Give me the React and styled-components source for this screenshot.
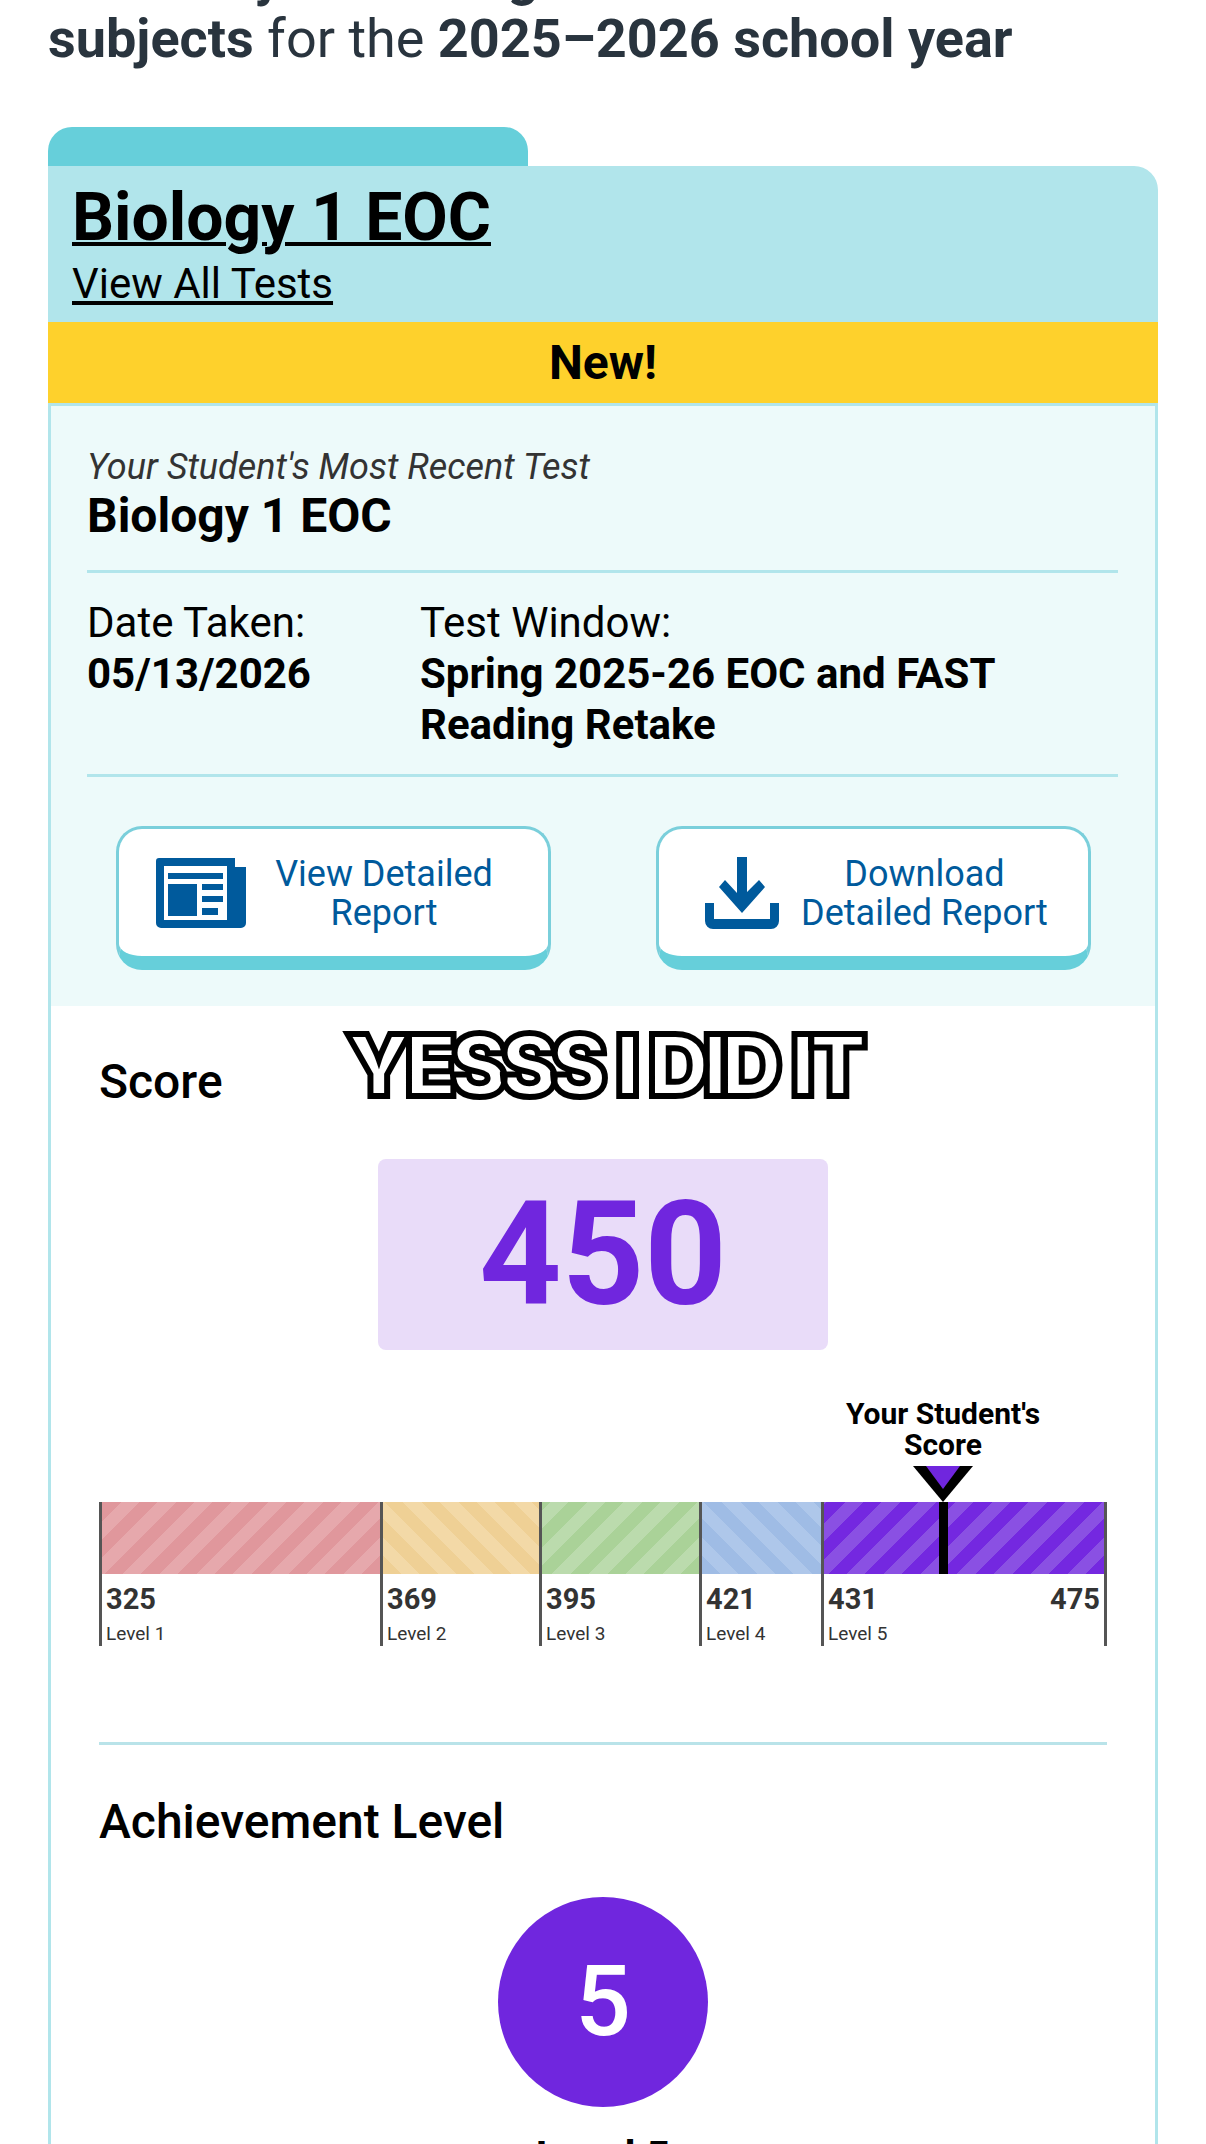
import React from "react";
import styled, { createGlobalStyle } from "styled-components";

const Global = createGlobalStyle`
  html, body { margin: 0; padding: 0; background: #fff; height: 2144px; overflow: hidden; }
  body { font-family: Roboto, "Liberation Sans", sans-serif; color: #000; }
  * { box-sizing: border-box; }
`;

const Page = styled.div`
  width: 1206px;
  height: 2144px;
  overflow: hidden;
  padding: 0 48px;
`;
const Heading = styled.h1`
  margin: -54px 0 0;
  font-size: 54px;
  line-height: 62px;
  font-weight: 400;
  color: #29343e;
  white-space: nowrap;
  b { font-weight: 700; }
`;
const Tab = styled.div`
  width: 480px;
  height: 39px;
  margin-top: 57px;
  background: #66cfda;
  border-radius: 24px 24px 0 0;
`;
const Header = styled.header`
  height: 156px;
  padding: 16px 24px 0;
  background: #b1e5eb;
  border-radius: 0 24px 0 0;
`;
const Title = styled.a`
  display: block;
  font-size: 66px;
  line-height: 72px;
  font-weight: 700;
  color: #000;
  text-decoration: underline;
  text-decoration-thickness: 4px;
  width: max-content;
`;
const AllTests = styled.a`
  display: block;
  margin-top: 5px;
  font-size: 42px;
  line-height: 50px;
  color: #000;
  text-decoration: underline;
  width: max-content;
`;
const Ribbon = styled.div`
  height: 81px;
  line-height: 82px;
  text-align: center;
  background: #fed12c;
  font-size: 48px;
  font-weight: 700;
`;
const Panel = styled.section`
  border: solid #b1e5eb;
  border-width: 3px 3px 0;
  height: 1800px;
`;
const Summary = styled.div`
  height: 600px;
  padding: 39px 37px 0 36px;
  background: #edfafa;
`;
const Eyebrow = styled.div`
  font-size: 36px;
  line-height: 44px;
  font-style: italic;
  color: #333;
`;
const TestName = styled.div`
  font-size: 48px;
  line-height: 54px;
  font-weight: 700;
  padding-bottom: 27px;
  border-bottom: 3px solid #b1e5eb;
`;
const Meta = styled.div`
  display: grid;
  grid-template-columns: 333px 1fr;
  padding: 24px 0 24px;
  border-bottom: 3px solid #b1e5eb;
`;
const MetaLabel = styled.div`
  font-size: 42px;
  line-height: 51px;
`;
const MetaValue = styled.div`
  font-size: 42px;
  line-height: 51px;
  font-weight: 700;
`;
const Actions = styled.div`
  display: flex;
  justify-content: space-between;
  padding: 49px 27px 0 29px;
`;
const ActionButton = styled.a`
  width: 435px;
  height: 144px;
  display: flex;
  align-items: center;
  padding: 0 0 0 ${(p) => p.$pad}px;
  background: #fff;
  border: 3px solid #7acfdb;
  border-bottom-width: 14px;
  border-bottom-color: #66cfda;
  border-radius: 26px;
  color: #005a9c;
  font-size: 36px;
  line-height: 39px;
  text-align: center;
`;
const ActionIcon = styled.svg`
  flex: none;
  fill: #005a9c;
`;
const ActionLabel = styled.span`
  flex: 1;
  padding-top: 3px;
  padding-right: ${(p) => p.$right}px;
  white-space: nowrap;
`;
const ScoreBlock = styled.div`
  position: relative;
  padding: 49px 48px 0;
`;
const SectionTitle = styled.h2`
  margin: 0;
  font-size: 48px;
  line-height: 54px;
  font-weight: 500;
`;
const Sticker = styled.div`
  position: absolute;
  left: 0;
  right: 0;
  top: 10px;
  text-align: center;
  font-family: Inter, Roboto, sans-serif;
  font-size: 85px;
  line-height: 100px;
  font-weight: 900;
  letter-spacing: -6.5px;
  word-spacing: 4px;
  color: #fff;
  -webkit-text-stroke: 6px #000;
  white-space: nowrap;
`;
const ScoreBox = styled.div`
  width: 450px;
  height: 191px;
  margin: 50px auto 0;
  background: #e9dcf9;
  border-radius: 8px;
  color: #7026de;
  font-size: 144px;
  line-height: 191px;
  font-weight: 700;
  text-align: center;
`;
const Chart = styled.div`
  position: relative;
  margin-top: 152px;
  display: flex;
  width: 1008px;
`;
const Segment = styled.div`
  width: ${(p) => p.$w}px;
  height: 144px;
  border-left: 3px solid #555;
  border-right: ${(p) => (p.$last ? "3px solid #555" : "0")};
  color: #333;
`;
const Stripe = styled.div`
  height: 72px;
  background: repeating-linear-gradient(
    ${(p) => p.$dir}deg,
    ${(p) => p.$a} 0 13px,
    ${(p) => p.$b} 13px 26px
  );
`;
const Labels = styled.div`
  display: flex;
  justify-content: space-between;
  padding: 8px 4px 0 4px;
  font-size: 29px;
  line-height: 34px;
  font-weight: 700;
`;
const LevelText = styled.div`
  padding-left: 4px;
  font-size: 19px;
  line-height: 24px;
  margin-top: 6px;
`;
const Callout = styled.div`
  position: absolute;
  left: 744px;
  bottom: 100%;
  width: 200px;
  text-align: center;
  font-size: 30px;
  line-height: 31px;
  font-weight: 700;
  padding-bottom: 42px;
`;
const Pointer = styled.svg`
  position: absolute;
  left: 70px;
  bottom: 0;
`;
const Needle = styled.div`
  position: absolute;
  left: 840px;
  top: 0;
  width: 9px;
  height: 72px;
  background: #000;
`;
const Rule = styled.hr`
  margin: 96px 0 0;
  height: 3px;
  border: 0;
  background: #b9e3e9;
`;
const Achievement = styled(SectionTitle)`
  margin-top: 50px;
`;
const Circle = styled.div`
  width: 210px;
  height: 210px;
  margin: 48px auto 0;
  border-radius: 50%;
  background: #7026de;
  color: #fff;
  font-size: 98px;
  line-height: 210px;
  font-weight: 500;
  text-align: center;
`;
const LevelName = styled.div`
  margin-top: 25px;
  text-align: center;
  font-size: 42px;
  line-height: 50px;
  font-weight: 700;
`;

const levels = [
  { w: 281, n: "325", l: "Level 1", dir: -45, a: "#e0979c", b: "#e6a8ac" },
  { w: 159, n: "369", l: "Level 2", dir: 45, a: "#efd095", b: "#f3d9a7" },
  { w: 160, n: "395", l: "Level 3", dir: -45, a: "#aad298", b: "#bbdbad" },
  { w: 122, n: "421", l: "Level 4", dir: 45, a: "#9fbce5", b: "#aec7ea" },
  { w: 286, n: "431", l: "Level 5", dir: -45, a: "#7428e0", b: "#8a50e3", end: "475", last: true },
];

export default function App() {
  return (
    <Page>
      <Global />
      <Heading>
        <b>Summary of Testing</b>
        <br />
        <b>subjects</b> for the <b>2025–2026 school year</b>
      </Heading>
      <Tab />
      <Header>
        <Title>Biology 1 EOC</Title>
        <AllTests>View All Tests</AllTests>
      </Header>
      <Ribbon>New!</Ribbon>
      <Panel>
        <Summary>
          <Eyebrow>Your Student's Most Recent Test</Eyebrow>
          <TestName>Biology 1 EOC</TestName>
          <Meta>
            <div>
              <MetaLabel>Date Taken:</MetaLabel>
              <MetaValue>05/13/2026</MetaValue>
            </div>
            <div>
              <MetaLabel>Test Window:</MetaLabel>
              <MetaValue>
                Spring 2025-26 EOC and FAST
                <br />
                Reading Retake
              </MetaValue>
            </div>
          </Meta>
          <Actions>
            <ActionButton $pad={37}>
              <ActionIcon width="90" height="70" viewBox="0 0 90 70">
                <path d="M3 0h76v9h11v56a5 5 0 0 1-5 5H5a5 5 0 0 1-5-5V3a3 3 0 0 1 3-3zm5 8v54h63V8z" fillRule="evenodd" />
                <path d="M12 15h55v6H12zM12 26h29v32H12zM46 26h21v6H46zM46 38h21v6H46zM46 50h16v7H46z" />
              </ActionIcon>
              <ActionLabel $right={26}>
                View Detailed
                <br />
                Report
              </ActionLabel>
            </ActionButton>
            <ActionButton $pad={46}>
              <ActionIcon width="74" height="72" viewBox="0 0 74 72">
                <path d="M32 0h10v36l-1 0 0 0h0l13-13 6 7-23 26-23-26 6-7 12 13z" />
                <path d="M0 46h9v16h56V46h9v18a8 8 0 0 1-8 8H8a8 8 0 0 1-8-8z" />
              </ActionIcon>
              <ActionLabel $right={18}>
                Download
                <br />
                Detailed Report
              </ActionLabel>
            </ActionButton>
          </Actions>
        </Summary>
        <ScoreBlock>
          <SectionTitle>Score</SectionTitle>
          <Sticker>YESSS I DID IT</Sticker>
          <ScoreBox>450</ScoreBox>
          <Chart>
            {levels.map((s) => (
              <Segment key={s.n} $w={s.w} $last={s.last}>
                <Stripe $dir={s.dir} $a={s.a} $b={s.b} />
                <Labels>
                  <span>{s.n}</span>
                  {s.end && <span>{s.end}</span>}
                </Labels>
                <LevelText>{s.l}</LevelText>
              </Segment>
            ))}
            <Needle />
            <Callout>
              Your Student's
              <br />
              Score
              <Pointer width="60" height="36" viewBox="0 0 60 36">
                <path d="M0 0h60L30 36z" fill="#000" />
                <path d="M13 0h34L30 23z" fill="#7026de" />
              </Pointer>
            </Callout>
          </Chart>
          <Rule />
          <Achievement>Achievement Level</Achievement>
          <Circle>5</Circle>
          <LevelName>Level 5</LevelName>
        </ScoreBlock>
      </Panel>
    </Page>
  );
}
